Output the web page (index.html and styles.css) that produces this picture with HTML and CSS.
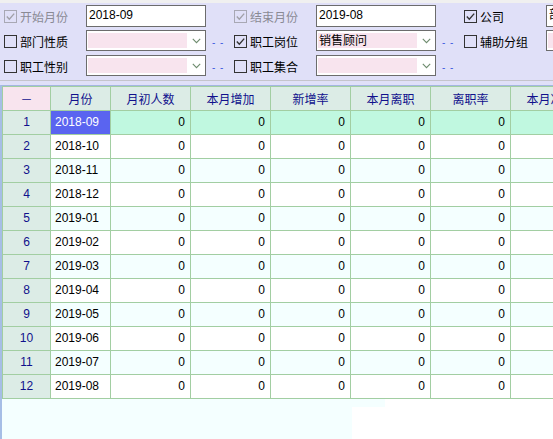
FILE: index.html
```html
<!DOCTYPE html>
<html lang="zh">
<head>
<meta charset="utf-8">
<title>月份统计</title>
<link rel="stylesheet" href="styles.css">
</head>
<body>
<div class="app">
  <div class="strip"></div>
  <div class="panel">
    <div class="prow">
      <div class="grp">
        <span class="lbl dis"><svg class="cb" viewBox="0 0 13 13"><rect x="0.5" y="0.5" width="12" height="12" fill="none" stroke="#a8a8b4"/><path d="M2.8 6.6 L5.3 9.2 L10.2 3.6" fill="none" stroke="#a0a0a8" stroke-width="1.4"/></svg>开始月份</span>
        <div class="inp">2018-09</div>
      </div>
      <div class="grp">
        <span class="lbl dis"><svg class="cb" viewBox="0 0 13 13"><rect x="0.5" y="0.5" width="12" height="12" fill="none" stroke="#a8a8b4"/><path d="M2.8 6.6 L5.3 9.2 L10.2 3.6" fill="none" stroke="#a0a0a8" stroke-width="1.4"/></svg>结束月份</span>
        <div class="inp">2019-08</div>
      </div>
      <div class="grp">
        <span class="lbl"><svg class="cb" viewBox="0 0 13 13"><rect x="0.5" y="0.5" width="12" height="12" fill="none" stroke="#333"/><path d="M2.8 6.6 L5.3 9.2 L10.2 3.6" fill="none" stroke="#333" stroke-width="1.4"/></svg>公司</span>
        <div class="inp wide">部门</div>
      </div>
    </div>
    <div class="prow">
      <div class="grp">
        <span class="lbl"><svg class="cb" viewBox="0 0 13 13"><rect x="0.5" y="0.5" width="12" height="12" fill="none" stroke="#333"/></svg>部门性质</span>
        <div class="dd"><div class="dd-field"></div><div class="dd-arrow"><svg viewBox="0 0 9 6" width="9" height="6"><path d="M0.8 0.8 L4.5 4.6 L8.2 0.8" fill="none" stroke="#6e8c6e" stroke-width="1.1"/></svg></div></div>
        <span class="more">- -</span>
      </div>
      <div class="grp">
        <span class="lbl"><svg class="cb" viewBox="0 0 13 13"><rect x="0.5" y="0.5" width="12" height="12" fill="none" stroke="#333"/><path d="M2.8 6.6 L5.3 9.2 L10.2 3.6" fill="none" stroke="#333" stroke-width="1.4"/></svg>职工岗位</span>
        <div class="dd"><div class="dd-field">销售顾问</div><div class="dd-arrow"><svg viewBox="0 0 9 6" width="9" height="6"><path d="M0.8 0.8 L4.5 4.6 L8.2 0.8" fill="none" stroke="#6e8c6e" stroke-width="1.1"/></svg></div></div>
        <span class="more">- -</span>
      </div>
      <div class="grp">
        <span class="lbl"><svg class="cb" viewBox="0 0 13 13"><rect x="0.5" y="0.5" width="12" height="12" fill="none" stroke="#333"/></svg>辅助分组</span>
        <div class="dd wide"><div class="dd-field"></div></div>
      </div>
    </div>
    <div class="prow">
      <div class="grp">
        <span class="lbl"><svg class="cb" viewBox="0 0 13 13"><rect x="0.5" y="0.5" width="12" height="12" fill="none" stroke="#333"/></svg>职工性别</span>
        <div class="dd"><div class="dd-field"></div><div class="dd-arrow"><svg viewBox="0 0 9 6" width="9" height="6"><path d="M0.8 0.8 L4.5 4.6 L8.2 0.8" fill="none" stroke="#6e8c6e" stroke-width="1.1"/></svg></div></div>
        <span class="more">- -</span>
      </div>
      <div class="grp">
        <span class="lbl"><svg class="cb" viewBox="0 0 13 13"><rect x="0.5" y="0.5" width="12" height="12" fill="none" stroke="#333"/></svg>职工集合</span>
        <div class="dd"><div class="dd-field"></div><div class="dd-arrow"><svg viewBox="0 0 9 6" width="9" height="6"><path d="M0.8 0.8 L4.5 4.6 L8.2 0.8" fill="none" stroke="#6e8c6e" stroke-width="1.1"/></svg></div></div>
        <span class="more">- -</span>
      </div>
    </div>
  </div>
  <div class="sep"></div>
  <div class="gwrap">
    <div class="grid">
      <div class="c h corner">－</div><div class="c h">月份</div><div class="c h">月初人数</div><div class="c h">本月增加</div><div class="c h">新增率</div><div class="c h">本月离职</div><div class="c h">离职率</div><div class="c h">本月净增</div>

      <div class="c rh">1</div><div class="c d sel-cell">2018-09</div><div class="c n sel">0</div><div class="c n sel">0</div><div class="c n sel">0</div><div class="c n sel">0</div><div class="c n sel">0</div><div class="c n sel">0</div>
      <div class="c rh">2</div><div class="c d ev">2018-10</div><div class="c n ev">0</div><div class="c n ev">0</div><div class="c n ev">0</div><div class="c n ev">0</div><div class="c n ev">0</div><div class="c n ev">0</div>
      <div class="c rh">3</div><div class="c d od">2018-11</div><div class="c n od">0</div><div class="c n od">0</div><div class="c n od">0</div><div class="c n od">0</div><div class="c n od">0</div><div class="c n od">0</div>
      <div class="c rh">4</div><div class="c d ev">2018-12</div><div class="c n ev">0</div><div class="c n ev">0</div><div class="c n ev">0</div><div class="c n ev">0</div><div class="c n ev">0</div><div class="c n ev">0</div>
      <div class="c rh">5</div><div class="c d od">2019-01</div><div class="c n od">0</div><div class="c n od">0</div><div class="c n od">0</div><div class="c n od">0</div><div class="c n od">0</div><div class="c n od">0</div>
      <div class="c rh">6</div><div class="c d ev">2019-02</div><div class="c n ev">0</div><div class="c n ev">0</div><div class="c n ev">0</div><div class="c n ev">0</div><div class="c n ev">0</div><div class="c n ev">0</div>
      <div class="c rh">7</div><div class="c d od">2019-03</div><div class="c n od">0</div><div class="c n od">0</div><div class="c n od">0</div><div class="c n od">0</div><div class="c n od">0</div><div class="c n od">0</div>
      <div class="c rh">8</div><div class="c d ev">2019-04</div><div class="c n ev">0</div><div class="c n ev">0</div><div class="c n ev">0</div><div class="c n ev">0</div><div class="c n ev">0</div><div class="c n ev">0</div>
      <div class="c rh">9</div><div class="c d od">2019-05</div><div class="c n od">0</div><div class="c n od">0</div><div class="c n od">0</div><div class="c n od">0</div><div class="c n od">0</div><div class="c n od">0</div>
      <div class="c rh">10</div><div class="c d ev">2019-06</div><div class="c n ev">0</div><div class="c n ev">0</div><div class="c n ev">0</div><div class="c n ev">0</div><div class="c n ev">0</div><div class="c n ev">0</div>
      <div class="c rh">11</div><div class="c d od">2019-07</div><div class="c n od">0</div><div class="c n od">0</div><div class="c n od">0</div><div class="c n od">0</div><div class="c n od">0</div><div class="c n od">0</div>
      <div class="c rh">12</div><div class="c d ev">2019-08</div><div class="c n ev">0</div><div class="c n ev">0</div><div class="c n ev">0</div><div class="c n ev">0</div><div class="c n ev">0</div><div class="c n ev">0</div>
    </div>
    <div class="filler">
      <div class="fill-a"></div>
      <div class="fill-b"></div>
    </div>
  </div>
</div>
</body>
</html>
```
FILE: styles.css
```css
html, body {
  margin: 0;
  padding: 0;
}
body {
  width: 553px;
  height: 439px;
  overflow: hidden;
  background: #ffffff;
  font-family: "Liberation Sans", "Noto Sans CJK SC", sans-serif;
  font-size: 12px;
  color: #000;
}
.app {
  width: 553px;
  height: 439px;
  display: flex;
  flex-direction: column;
  overflow: hidden;
}
.strip {
  height: 3px;
  background: #f0f0f0;
  flex: none;
}
.panel {
  flex: none;
  height: 78px;
  box-sizing: border-box;
  padding-top: 2px;
  background: #e0e0f8;
  border-bottom: 1px solid #c4c4cc;
}
.prow {
  display: flex;
  height: 25px;
  padding-left: 4px;
  white-space: nowrap;
}
.grp {
  flex: none;
  width: 230px;
  height: 22px;
  display: flex;
  align-items: center;
}
.lbl {
  flex: none;
  width: 82px;
  display: flex;
  align-items: center;
  gap: 3px;
  font-family: "Noto Sans CJK SC", sans-serif;
  font-size: 12px;
  color: #000;
}
.lbl.dis {
  color: #8a8a94;
}
.cb {
  width: 13px;
  height: 13px;
  flex: none;
}
.inp {
  flex: none;
  width: 120px;
  height: 22px;
  box-sizing: border-box;
  border: 1px solid #6c6c6c;
  background: #ffffff;
  padding: 1px 0 0 2px;
  line-height: 16px;
  font-family: "Liberation Sans", "Noto Sans CJK SC", sans-serif;
}
.inp.wide, .dd.wide {
  width: 200px;
}
.dd {
  flex: none;
  width: 120px;
  height: 21px;
  box-sizing: border-box;
  border: 1px solid #6c6c6c;
  background: #ffffff;
  padding: 2px 0 2px 1px;
  display: flex;
  align-self: flex-start;
}
.dd-field {
  width: 98px;
  background: #f8e4ee;
  line-height: 13px;
  padding-left: 1px;
  font-family: "Noto Sans CJK SC", sans-serif;
}
.dd.wide .dd-field {
  width: 190px;
}
.dd-arrow {
  flex: 1;
  display: flex;
  align-items: center;
  justify-content: center;
  padding-left: 1px;
}
.more {
  margin-left: 6px;
  color: #3c5ce0;
  font-size: 10px;
  letter-spacing: 1px;
  align-self: flex-start;
  padding-top: 7px;
}
.sep {
  flex: none;
  height: 4px;
  background: #e0e0f8;
}
.gwrap {
  flex: 1;
  display: flex;
  flex-direction: column;
  border-top: 1px solid #a4b6e2;
  border-left: 2px solid #a6bee6;
  overflow: hidden;
}
.grid {
  flex: none;
  display: grid;
  grid-template-columns: 48px 60px repeat(6, 80px);
  width: max-content;
  border-top: 1px solid #a2cea2;
  border-left: 1px solid #a2cea2;
}
.c {
  height: 24px;
  box-sizing: border-box;
  border-right: 1px solid #a2cea2;
  border-bottom: 1px solid #a2cea2;
  line-height: 23px;
  white-space: nowrap;
  overflow: hidden;
}
.h {
  background: #dcece6;
  color: #10108c;
  text-align: center;
  font-family: "Noto Sans CJK SC", sans-serif;
}
.corner {
  background: #f8e4ee;
}
.rh {
  background: #dcece6;
  color: #10108c;
  text-align: center;
}
.d {
  padding-left: 4px;
}
.n {
  text-align: right;
  padding-right: 5px;
}
.sel {
  background: #c0f8e0;
}
.sel-cell {
  background: #5a64f0;
  color: #ffffff;
}
.ev {
  background: #ffffff;
}
.od {
  background: #f4ffff;
}
.filler {
  flex: 1;
  display: flex;
  align-items: flex-start;
  background: #ffffff;
}
.fill-a {
  width: 350px;
  height: 100%;
  background: #f4ffff;
}
.fill-b {
  width: 33px;
  height: 8px;
  background: #f4ffff;
}
```
